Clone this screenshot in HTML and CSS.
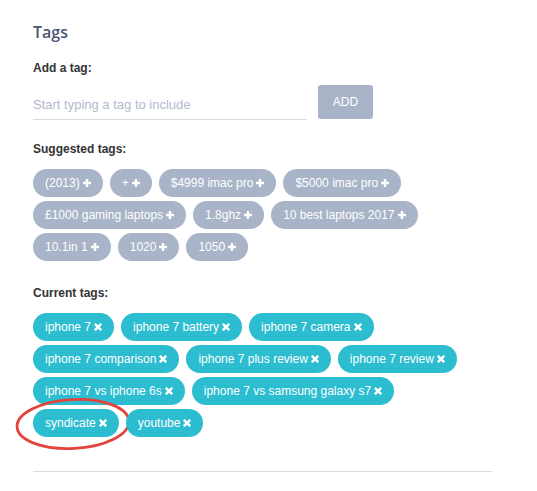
FILE: index.html
```html
<!DOCTYPE html>
<html>
<head>
<meta charset="utf-8">
<link rel="stylesheet" href="styles.css">
</head>
<body>
<div class="panel">
  <h2 class="title">Tags</h2>
  <div class="label">Add a tag:</div>
  <div class="add-row">
    <div class="input">Start typing a tag to include</div>
    <button class="add-btn">ADD</button>
  </div>
  <div class="label label-suggest">Suggested tags:</div>
  <div class="tags">
    <span class="tag tag-suggest">(2013)<svg class="ico" viewBox="0 0 8 8"><path d="M4 0V8M0 4H8"/></svg></span>
    <span class="tag tag-suggest">+<svg class="ico" viewBox="0 0 8 8"><path d="M4 0V8M0 4H8"/></svg></span>
    <span class="tag tag-suggest">$4999 imac pro<svg class="ico" viewBox="0 0 8 8"><path d="M4 0V8M0 4H8"/></svg></span>
    <span class="tag tag-suggest">$5000 imac pro<svg class="ico" viewBox="0 0 8 8"><path d="M4 0V8M0 4H8"/></svg></span>
    <span class="tag tag-suggest">£1000 gaming laptops<svg class="ico" viewBox="0 0 8 8"><path d="M4 0V8M0 4H8"/></svg></span>
    <span class="tag tag-suggest">1.8ghz<svg class="ico" viewBox="0 0 8 8"><path d="M4 0V8M0 4H8"/></svg></span>
    <span class="tag tag-suggest">10 best laptops 2017<svg class="ico" viewBox="0 0 8 8"><path d="M4 0V8M0 4H8"/></svg></span>
    <span class="tag tag-suggest">10.1in 1<svg class="ico" viewBox="0 0 8 8"><path d="M4 0V8M0 4H8"/></svg></span>
    <span class="tag tag-suggest">1020<svg class="ico" viewBox="0 0 8 8"><path d="M4 0V8M0 4H8"/></svg></span>
    <span class="tag tag-suggest">1050<svg class="ico" viewBox="0 0 8 8"><path d="M4 0V8M0 4H8"/></svg></span>
  </div>
  <div class="label label-current">Current tags:</div>
  <div class="tags">
    <span class="tag tag-current">iphone 7<svg class="ico" viewBox="0 0 8 8"><path d="M0.8 0.8L7.2 7.2M7.2 0.8L0.8 7.2"/></svg></span>
    <span class="tag tag-current">iphone 7 battery<svg class="ico" viewBox="0 0 8 8"><path d="M0.8 0.8L7.2 7.2M7.2 0.8L0.8 7.2"/></svg></span>
    <span class="tag tag-current">iphone 7 camera<svg class="ico" viewBox="0 0 8 8"><path d="M0.8 0.8L7.2 7.2M7.2 0.8L0.8 7.2"/></svg></span>
    <span class="tag tag-current">iphone 7 comparison<svg class="ico" viewBox="0 0 8 8"><path d="M0.8 0.8L7.2 7.2M7.2 0.8L0.8 7.2"/></svg></span>
    <span class="tag tag-current">iphone 7 plus review<svg class="ico" viewBox="0 0 8 8"><path d="M0.8 0.8L7.2 7.2M7.2 0.8L0.8 7.2"/></svg></span>
    <span class="tag tag-current">iphone 7 review<svg class="ico" viewBox="0 0 8 8"><path d="M0.8 0.8L7.2 7.2M7.2 0.8L0.8 7.2"/></svg></span>
    <span class="tag tag-current">iphone 7 vs iphone 6s<svg class="ico" viewBox="0 0 8 8"><path d="M0.8 0.8L7.2 7.2M7.2 0.8L0.8 7.2"/></svg></span>
    <span class="tag tag-current">iphone 7 vs samsung galaxy s7<svg class="ico" viewBox="0 0 8 8"><path d="M0.8 0.8L7.2 7.2M7.2 0.8L0.8 7.2"/></svg></span>
    <span class="tag tag-current">syndicate<svg class="ico" viewBox="0 0 8 8"><path d="M0.8 0.8L7.2 7.2M7.2 0.8L0.8 7.2"/></svg><svg class="circle" width="118" height="54" viewBox="0 0 118 54"><ellipse cx="59" cy="27" rx="56" ry="24.5" transform="rotate(-3 59 27)"/></svg></span>
    <span class="tag tag-current">youtube<svg class="ico" viewBox="0 0 8 8"><path d="M0.8 0.8L7.2 7.2M7.2 0.8L0.8 7.2"/></svg></span>
  </div>
  <hr class="rule">
</div>
</body>
</html>
```
FILE: styles.css
```css
html, body {
  margin: 0;
  padding: 0;
  background: #ffffff;
}
body {
  font-family: "Liberation Sans", Arial, sans-serif;
  color: #333333;
}
.panel {
  padding: 21px 45px 0 33px;
}
.title {
  margin: 0;
  font-family: "Open Sans", sans-serif;
  font-size: 16px;
  font-weight: 600;
  line-height: 22px;
  color: #4b5672;
}
.label {
  margin-top: 18px;
  font-size: 12px;
  font-weight: bold;
  line-height: 14px;
  color: #333333;
}
.add-row {
  display: flex;
  align-items: flex-start;
  margin-top: 12px;
}
.input {
  width: 274px;
  height: 33px;
  box-sizing: border-box;
  padding-top: 10px;
  border-bottom: 1px solid #d6dae4;
  font-size: 13px;
  line-height: 15px;
  color: #b2bacd;
}
.add-btn {
  margin-left: 11px;
  margin-top: -2px;
  width: 55px;
  height: 34px;
  border: none;
  border-radius: 3px;
  background: #a9b3c8;
  color: #ffffff;
  font-family: "Liberation Sans", Arial, sans-serif;
  font-size: 12px;
  padding: 0;
}
.label-suggest {
  margin-top: 22px;
}
.tags {
  display: flex;
  flex-wrap: wrap;
  gap: 4px 7px;
  max-width: 445px;
  margin-top: 13px;
}
.label-current {
  margin-top: 25px;
}
.tag {
  position: relative;
  display: inline-flex;
  align-items: center;
  height: 28px;
  box-sizing: border-box;
  padding: 0 12px;
  border-radius: 14px;
  font-size: 12px;
  color: #ffffff;
  white-space: nowrap;
}
.tag-suggest {
  background: #a9b4c9;
}
.tag-current {
  background: #2dbdd0;
}
.ico {
  flex: none;
  width: 8px;
  height: 8px;
  margin-left: 3px;
  fill: none;
  stroke: #ffffff;
  stroke-width: 2.4;
}
.circle {
  position: absolute;
  left: -19px;
  top: -12px;
  width: 118px;
  height: 54px;
  overflow: visible;
  fill: none;
  stroke: #e2433b;
  stroke-width: 2.8;
}
.rule {
  margin: 34px 0 0 0;
  border: none;
  border-top: 1px solid #d8dce5;
  height: 0;
}
```
